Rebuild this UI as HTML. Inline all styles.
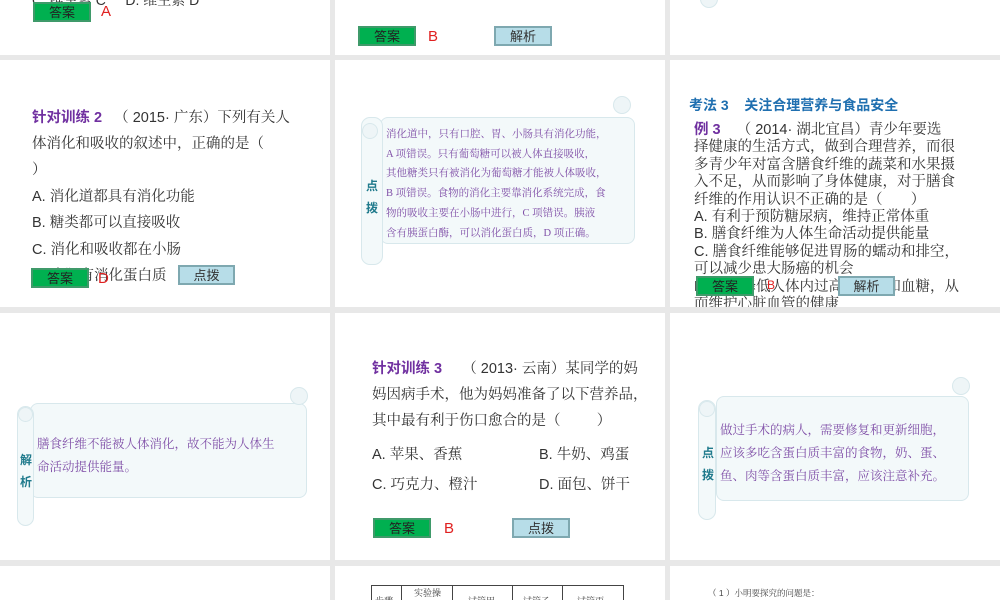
<!DOCTYPE html>
<html><head><meta charset="utf-8"><style>
*{margin:0;padding:0;box-sizing:border-box}
body{width:1000px;height:600px;background:#e8e8e8;position:relative;overflow:hidden;font-family:"Liberation Sans","Noto Serif CJK SC",serif;color:#333}
.s{position:absolute;background:#fff;overflow:hidden}
.a{position:absolute;white-space:nowrap}
.btn{position:absolute;height:20px;text-align:center;font-size:13px;line-height:17px;border:2px solid #5a9a9a;font-family:"Liberation Sans","Noto Sans CJK SC",sans-serif}
.g{background:#00b050;color:#222;border-color:#3f9a6a}
.b{background:#b7dde8;color:#333;border-color:#7ea8b0}
.red{color:#e02020;font-size:15px;font-family:"Liberation Sans",sans-serif}
.pur{color:#7030a0;font-weight:bold;font-family:"Liberation Sans","Noto Sans CJK SC",sans-serif}
.scroll{position:absolute;background:#f3f9fa;border:1px solid #d8e8ec;border-radius:8px}
.strip{position:absolute;background:#f3f9fa;border:1px solid #d8e8ec;border-radius:9px}
.curl{position:absolute;width:18px;height:18px;border-radius:50%;background:#eef5f7;border:1px solid #d8e8ec}
.tag{position:absolute;color:#1f7a8c;font-weight:bold;font-size:12px;line-height:22px;width:14px;text-align:center;font-family:"Noto Sans CJK SC",sans-serif}
.pt{position:absolute;color:#8050a8;font-family:"Liberation Serif","Noto Serif CJK SC",serif;white-space:nowrap}
</style></head><body>

<!-- row1 -->
<div class="s" style="left:0;top:0;width:330px;height:55px">
<div class="a" style="left:32px;top:-10px;font-size:14px">C. 维生素 C &nbsp; &nbsp; D. 维生素 D</div>
<div class="btn g" style="left:33px;top:2px;width:58px">答案</div>
<div class="a red" style="left:101px;top:3px">A</div>
</div>
<div class="s" style="left:335px;top:0;width:330px;height:55px">
<div class="btn g" style="left:23px;top:26px;width:58px">答案</div>
<div class="a red" style="left:93px;top:28px">B</div>
<div class="btn b" style="left:159px;top:26px;width:58px">解析</div>
</div>
<div class="s" style="left:670px;top:0;width:330px;height:55px">
<div class="curl" style="left:30px;top:-10px"></div>
</div>

<!-- row2 -->
<div class="s" style="left:0;top:60px;width:330px;height:247px">
<div class="a" style="left:32px;top:45px;font-size:14.5px;line-height:26px"><span class="pur">针对训练 2</span> &nbsp; （ 2015· 广东）下列有关人<br>体消化和吸收的叙述中，正确的是（<br>）</div>
<div class="a" style="left:32px;top:124px;font-size:14.5px;line-height:26.3px">A. 消化道都具有消化功能<br>B. 糖类都可以直接吸收<br>C. 消化和吸收都在小肠<br>D. 小肠有消化蛋白质</div>
<div class="btn g" style="left:31px;top:208px;width:58px">答案</div>
<div class="a red" style="left:98px;top:210px">D</div>
<div class="btn b" style="left:178px;top:205px;width:57px">点拨</div>
</div>
<div class="s" style="left:335px;top:60px;width:330px;height:247px">
<div class="scroll" style="left:45px;top:57px;width:255px;height:127px"></div>
<div class="curl" style="left:278px;top:36px"></div>
<div class="strip" style="left:26px;top:57px;width:22px;height:148px"></div>
<div class="curl" style="left:27px;top:63px;width:16px;height:16px"></div>
<div class="tag" style="left:30px;top:115px">点<br>拨</div>
<div class="pt" style="left:51px;top:65px;font-size:10.5px;line-height:19.7px">消化道中，只有口腔、胃、小肠具有消化功能，<br>A 项错误。只有葡萄糖可以被人体直接吸收，<br>其他糖类只有被消化为葡萄糖才能被人体吸收，<br>B 项错误。食物的消化主要靠消化系统完成，食<br>物的吸收主要在小肠中进行，C 项错误。胰液<br>含有胰蛋白酶，可以消化蛋白质，D 项正确。</div>
</div>
<div class="s" style="left:670px;top:60px;width:330px;height:247px">
<div class="a" style="left:19px;top:35px;font-size:14px;color:#1f6fb0;font-weight:bold;font-family:'Liberation Sans','Noto Sans CJK SC',sans-serif">考法 3 &nbsp; &nbsp;关注合理营养与食品安全</div>
<div class="a" style="left:24px;top:62px;font-size:14.5px;line-height:17.4px"><span class="pur">例 3</span> &nbsp; &nbsp;（ 2014· 湖北宜昌）青少年要选<br>择健康的生活方式，做到合理营养，而很<br>多青少年对富含膳食纤维的蔬菜和水果摄<br>入不足，从而影响了身体健康，对于膳食<br>纤维的作用认识不正确的是（ &nbsp; &nbsp; &nbsp; ）</div>
<div class="a" style="left:24px;top:149px;font-size:14.5px;line-height:17.4px">A. 有利于预防糖尿病，维持正常体重<br>B. 膳食纤维为人体生命活动提供能量<br>C. 膳食纤维能够促进胃肠的蠕动和排空，<br>可以减少患大肠癌的机会<br>D. 能够降低人体内过高的血脂和血糖，从<br>而维护心脏血管的健康</div>
<div class="btn g" style="left:26px;top:216px;width:58px">答案</div>
<div class="a red" style="left:97px;top:218px;font-size:12px">B</div>
<div class="btn b" style="left:168px;top:216px;width:57px">解析</div>
</div>

<!-- row3 -->
<div class="s" style="left:0;top:313px;width:330px;height:247px">
<div class="scroll" style="left:30px;top:90px;width:277px;height:95px"></div>
<div class="curl" style="left:290px;top:74px"></div>
<div class="strip" style="left:17px;top:93px;width:17px;height:120px"></div>
<div class="curl" style="left:18px;top:94px;width:15px;height:15px"></div>
<div class="tag" style="left:19px;top:136px">解<br>析</div>
<div class="pt" style="left:37px;top:120px;font-size:12.5px;line-height:23px">膳食纤维不能被人体消化，故不能为人体生<br>命活动提供能量。</div>
</div>
<div class="s" style="left:335px;top:313px;width:330px;height:247px">
<div class="a" style="left:37px;top:43px;font-size:14.5px;line-height:26px"><span class="pur">针对训练 3</span> &nbsp; &nbsp; （ 2013· 云南）某同学的妈<br>妈因病手术，他为妈妈准备了以下营养品，<br>其中最有利于伤口愈合的是（ &nbsp; &nbsp; &nbsp; &nbsp; ）</div>
<div class="a" style="left:37px;top:127px;font-size:14.5px;line-height:30px">A. 苹果、香蕉<br>C. 巧克力、橙汁</div>
<div class="a" style="left:204px;top:127px;font-size:14.5px;line-height:30px">B. 牛奶、鸡蛋<br>D. 面包、饼干</div>
<div class="btn g" style="left:38px;top:205px;width:58px">答案</div>
<div class="a red" style="left:109px;top:207px">B</div>
<div class="btn b" style="left:177px;top:205px;width:58px">点拨</div>
</div>
<div class="s" style="left:670px;top:313px;width:330px;height:247px">
<div class="scroll" style="left:46px;top:83px;width:253px;height:105px"></div>
<div class="curl" style="left:282px;top:64px"></div>
<div class="strip" style="left:28px;top:87px;width:18px;height:120px"></div>
<div class="curl" style="left:29px;top:88px;width:16px;height:16px"></div>
<div class="tag" style="left:31px;top:129px">点<br>拨</div>
<div class="pt" style="left:50px;top:106px;font-size:12.5px;line-height:23px">做过手术的病人，需要修复和更新细胞，<br>应该多吃含蛋白质丰富的食物，奶、蛋、<br>鱼、肉等含蛋白质丰富，应该注意补充。</div>
</div>

<!-- row4 -->
<div class="s" style="left:0;top:566px;width:330px;height:34px"></div>
<div class="s" style="left:335px;top:566px;width:330px;height:34px">
<div style="position:absolute;left:36px;top:19px;width:253px;height:30px;border:1.5px solid #444"></div>
<div style="position:absolute;left:66px;top:19px;width:1px;height:20px;background:#444"></div>
<div style="position:absolute;left:117px;top:19px;width:1px;height:20px;background:#444"></div>
<div style="position:absolute;left:177px;top:19px;width:1px;height:20px;background:#444"></div>
<div style="position:absolute;left:227px;top:19px;width:1px;height:20px;background:#444"></div>
<div class="a" style="left:79px;top:20px;font-size:9px;color:#444">实验操</div>
<div class="a" style="left:40px;top:28px;font-size:9px;color:#444">步骤</div>
<div class="a" style="left:133px;top:28px;font-size:9px;color:#444">试管甲</div>
<div class="a" style="left:188px;top:28px;font-size:9px;color:#444">试管乙</div>
<div class="a" style="left:242px;top:28px;font-size:9px;color:#444">试管丙</div>
</div>
<div class="s" style="left:670px;top:566px;width:330px;height:34px">
<div class="a" style="left:38px;top:21px;font-size:8.5px;color:#444">（ 1 ）小明要探究的问题是：</div>
</div>
</body></html>
